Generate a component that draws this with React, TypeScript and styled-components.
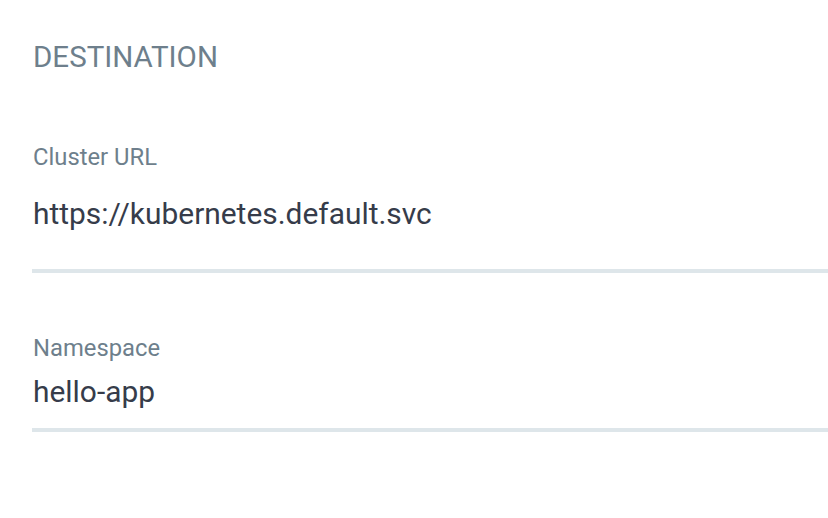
import React from "react";
import styled, { createGlobalStyle } from "styled-components";

const Global = createGlobalStyle`
  html, body { margin: 0; padding: 0; background: #ffffff; }
  body { font-family: Roboto, "Liberation Sans", sans-serif; }
`;

const Page = styled.div`
  width: 828px;
  height: 518px;
  box-sizing: border-box;
  padding: 40px 0 0 32px;
  background: #ffffff;
`;

const SectionTitle = styled.h2`
  margin: 0 0 0 1px;
  font-size: 29.5px;
  line-height: 34px;
  font-weight: 400;
  color: #6e7f8c;
  text-transform: uppercase;
`;

const Field = styled.div<{ $gap: number; $top: number }>`
  margin-top: ${(p) => p.$top}px;
  display: flex;
  flex-direction: column;
  gap: ${(p) => p.$gap}px;
  border-bottom: 4px solid #dee6ea;
`;

const Label = styled.label`
  font-size: 23.8px;
  line-height: 27px;
  color: #6e7f8c;
  padding-left: 1px;
`;

const Value = styled.div<{ $pad: number }>`
  font-size: 29.9px;
  line-height: 34px;
  color: #363c4a;
  padding-left: 1px;
  padding-bottom: ${(p) => p.$pad}px;
`;

export default function App() {
  return (
    <>
      <Global />
      <Page>
        <SectionTitle>Destination</SectionTitle>
        <Field $top={70} $gap={26}>
          <Label>Cluster URL</Label>
          <Value $pad={38}>https://kubernetes.default.svc</Value>
        </Field>
        <Field $top={62} $gap={13}>
          <Label>Namespace</Label>
          <Value $pad={19}>hello-app</Value>
        </Field>
      </Page>
    </>
  );
}
